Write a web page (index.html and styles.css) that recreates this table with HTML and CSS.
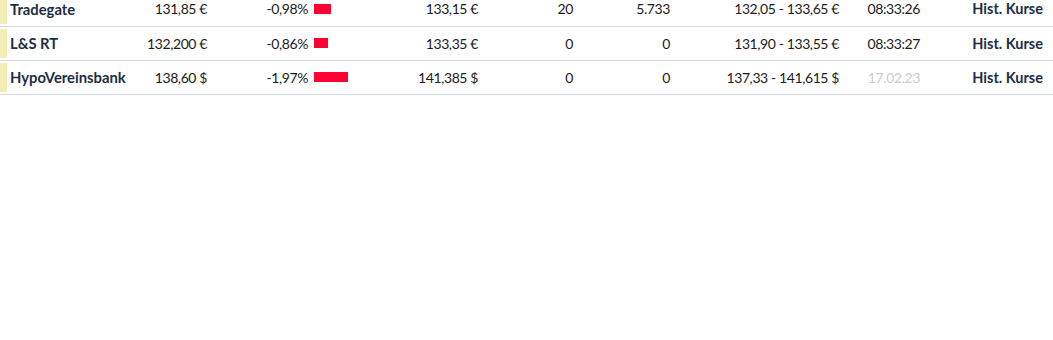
FILE: index.html
```html
<!DOCTYPE html>
<html lang="de">
<head>
<meta charset="utf-8">
<link rel="stylesheet" href="styles.css">
</head>
<body>
<table class="quotes">
  <colgroup>
    <col class="w-name"><col class="w-price"><col class="w-pct"><col class="w-bar"><col class="w-prev">
    <col class="w-vol"><col class="w-turn"><col class="w-range"><col class="w-time"><col class="w-link">
  </colgroup>
  <tbody>
    <tr>
      <td class="name"><span class="mark"></span>Tradegate</td>
      <td class="num">131,85 €</td>
      <td class="num pct">-0,98%</td>
      <td class="barcell"><span class="bar" style="width:17px"></span></td>
      <td class="num">133,15 €</td>
      <td class="num">20</td>
      <td class="num">5.733</td>
      <td class="num">132,05 - 133,65 €</td>
      <td class="num">08:33:26</td>
      <td class="num link">Hist. Kurse</td>
    </tr>
    <tr>
      <td class="name"><span class="mark"></span>L&amp;S RT</td>
      <td class="num">132,200 €</td>
      <td class="num pct">-0,86%</td>
      <td class="barcell"><span class="bar" style="width:14px"></span></td>
      <td class="num">133,35 €</td>
      <td class="num">0</td>
      <td class="num">0</td>
      <td class="num">131,90 - 133,55 €</td>
      <td class="num">08:33:27</td>
      <td class="num link">Hist. Kurse</td>
    </tr>
    <tr>
      <td class="name"><span class="mark"></span>HypoVereinsbank</td>
      <td class="num">138,60 $</td>
      <td class="num pct">-1,97%</td>
      <td class="barcell"><span class="bar" style="width:34px"></span></td>
      <td class="num">141,385 $</td>
      <td class="num">0</td>
      <td class="num">0</td>
      <td class="num">137,33 - 141,615 $</td>
      <td class="num stale">17.02.23</td>
      <td class="num link">Hist. Kurse</td>
    </tr>
  </tbody>
</table>
</body>
</html>
```
FILE: styles.css
```css
html, body {
  margin: 0;
  padding: 0;
  background: #fff;
}
body {
  font-family: Lato, "Liberation Sans", sans-serif;
  font-size: 14px;
  color: #1b1b1b;
}
.quotes {
  width: 1053px;
  table-layout: fixed;
  border-collapse: collapse;
  margin-top: -8px;
}
.w-name { width: 140px; }
.w-price { width: 77px; }
.w-pct { width: 97px; }
.w-bar { width: 66px; }
.w-prev { width: 108px; }
.w-vol { width: 95px; }
.w-turn { width: 97px; }
.w-range { width: 169px; }
.w-time { width: 81px; }
.w-link { width: 123px; }
.quotes tr {
  border-bottom: 1px solid #d3dbe3;
}
.quotes td {
  height: 34px;
  padding: 0 10px 0 0;
  vertical-align: middle;
  white-space: nowrap;
  box-sizing: border-box;
}
.num {
  text-align: right;
  letter-spacing: -0.4px;
}
.quotes td.name {
  position: relative;
  padding-left: 10px;
  font-size: 14.8px;
  font-weight: 700;
  color: #1c2e45;
}
.mark {
  position: absolute;
  left: 0;
  top: 2px;
  bottom: 2px;
  width: 7px;
  background: #f2eeb6;
}
.quotes td.pct { padding-right: 6px; }
.quotes td.barcell { padding: 0; }
.bar {
  display: block;
  height: 10px;
  background: #ff0033;
}
.stale { color: #cccccc; }
.quotes td.link {
  font-size: 14.5px;
  font-weight: 700;
  letter-spacing: 0;
  color: #1c2e45;
}
```
